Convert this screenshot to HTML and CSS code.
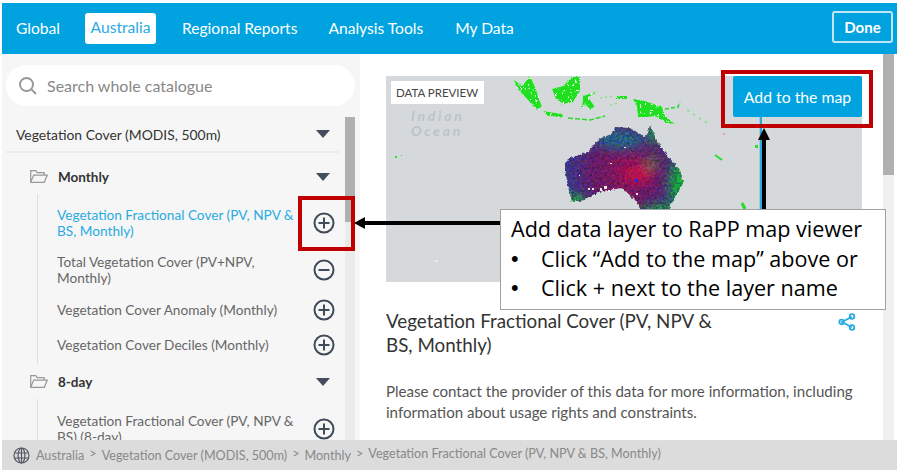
FILE: index.html
```html
<!DOCTYPE html>
<html lang="en">
<head>
	<meta charset="utf-8">
	<title>Add data layer to RaPP map viewer</title>
	<link rel="stylesheet" href="styles.css">
</head>
<body>

<div class="app">
	<header class="topbar">
		<nav class="tabs">
			<a class="tab tab-global">Global</a>
			<a class="tab tab-active">Australia</a>
			<a class="tab tab-regional">Regional Reports</a>
			<a class="tab tab-analysis">Analysis Tools</a>
			<a class="tab">My Data</a>
		</nav>
		<button class="done">Done</button>
	</header>

	<div class="content">
		<aside class="sidebar">
			<div class="search">
				<svg class="search-icon" width="20" height="20" viewBox="0 0 20 20"><circle cx="8.500" cy="8.500" r="6.500"/><path d="M13.500 13.500l4.500 4.500"/></svg>
				<span>Search whole catalogue</span>
			</div>
			<div class="tree-wrap">
				<div class="tree">
					<div class="tree-head">
						<span>Vegetation Cover (MODIS, 500m)</span>
						<svg class="caret" width="14" height="8" viewBox="0 0 14 8"><path d="M0 0h14l-7 8z"/></svg>
					</div>

					<div class="group group-first">
						<div class="group-head">
							<svg class="folder" width="18" height="13" viewBox="0 0 18 13"><path d="M.7 12.300V.7h5l1.500 2h7v2.400M.7 12.300l3-7.200h13.600l-3 7.200z"/></svg>
							<b>Monthly</b>
							<svg class="caret" width="14" height="8" viewBox="0 0 14 8"><path d="M0 0h14l-7 8z"/></svg>
						</div>
						<div class="items">
							<div class="item item-current">
								<span>Vegetation Fractional Cover (PV, NPV &amp; BS, Monthly)</span>
								<svg class="toggle" width="22" height="22" viewBox="0 0 22 22"><circle cx="11" cy="11" r="9.500"/><path d="M11 5.500v11M5.500 11h11"/></svg>
							</div>
							<div class="item">
								<span>Total Vegetation Cover (PV+NPV, Monthly)</span>
								<svg class="toggle" width="22" height="22" viewBox="0 0 22 22"><circle cx="11" cy="11" r="9.500"/><path d="M5.500 11h11"/></svg>
							</div>
							<div class="item">
								<span>Vegetation Cover Anomaly (Monthly)</span>
								<svg class="toggle" width="22" height="22" viewBox="0 0 22 22"><circle cx="11" cy="11" r="9.500"/><path d="M11 5.500v11M5.500 11h11"/></svg>
							</div>
							<div class="item">
								<span>Vegetation Cover Deciles (Monthly)</span>
								<svg class="toggle" width="22" height="22" viewBox="0 0 22 22"><circle cx="11" cy="11" r="9.500"/><path d="M11 5.500v11M5.500 11h11"/></svg>
							</div>
						</div>
					</div>

					<div class="group">
						<div class="group-head">
							<svg class="folder" width="18" height="13" viewBox="0 0 18 13"><path d="M.7 12.300V.7h5l1.500 2h7v2.400M.7 12.300l3-7.200h13.600l-3 7.200z"/></svg>
							<b>8-day</b>
							<svg class="caret" width="14" height="8" viewBox="0 0 14 8"><path d="M0 0h14l-7 8z"/></svg>
						</div>
						<div class="items">
							<div class="item">
								<span>Vegetation Fractional Cover (PV, NPV &amp; BS) (8-day)</span>
								<svg class="toggle" width="22" height="22" viewBox="0 0 22 22"><circle cx="11" cy="11" r="9.500"/><path d="M11 5.500v11M5.500 11h11"/></svg>
							</div>
						</div>
					</div>
				</div>
				<div class="scrolltrack"><div class="scrollthumb"></div></div>
			</div>
		</aside>

		<main class="detail">
			<div class="detail-body">
				<div class="preview">
					<svg class="preview-map" width="476" height="206" viewBox="386 76 476 206">
						<defs>
							<filter id="rough" x="-5%" y="-5%" width="110%" height="110%" color-interpolation-filters="sRGB">
								<feTurbulence type="fractalNoise" baseFrequency="0.4" numOctaves="2" seed="4" result="n"/>
								<feDisplacementMap in="SourceGraphic" in2="n" scale="3" xChannelSelector="R" yChannelSelector="G" result="d"/>
								<feFlood flood-color="#fff"/>
								<feComposite in2="d" operator="in" result="under"/>
								<feColorMatrix in="n" type="matrix" values="0 0 0 0 0 0 0 0 0 0 0 0 0 0 0 12 0 0 0 -3.300" result="mask"/>
								<feComposite in="d" in2="mask" operator="in" result="top"/>
								<feMerge><feMergeNode in="under"/><feMergeNode in="top"/></feMerge>
							</filter>
							<filter id="speckle" x="-5%" y="-5%" width="110%" height="110%" color-interpolation-filters="sRGB">
								<feTurbulence type="fractalNoise" baseFrequency="0.4" numOctaves="2" seed="9" result="n"/>
								<feDisplacementMap in="SourceGraphic" in2="n" scale="4" xChannelSelector="R" yChannelSelector="G" result="d"/>
								<feColorMatrix in="n" type="matrix" values=".7 0 0 0 .15 0 .7 0 0 .15 0 0 .7 0 .15 0 0 0 0 1" result="g"/>
								<feBlend in="g" in2="d" mode="overlay" result="b"/>
								<feComposite in="b" in2="d" operator="in"/>
							</filter>
							<filter id="soft" x="-50%" y="-50%" width="200%" height="200%">
								<feGaussianBlur stdDeviation="6"/>
							</filter>
							<radialGradient id="aus" gradientUnits="userSpaceOnUse" cx="625" cy="172" r="66">
								<stop offset="0" stop-color="#8a1458"/>
								<stop offset=".5" stop-color="#641c68"/>
								<stop offset=".85" stop-color="#3c3486"/>
								<stop offset="1" stop-color="#344a88"/>
							</radialGradient>
							<clipPath id="ausclip">
								<path d="M565 163l5-5 18-6 10-12 15-7 2-6 15 1 15 9 3-4 2-8 5 12 10 16 15 17 3 13-11 20-7 10-23-1-7-12-13-12-24 4-13 8-13 2-4-15-3-17z"/>
							</clipPath>
						</defs>
						<g class="islands" filter="url(#rough)">
							<path d="M513 79l9 7 8-10 5 11 7 20-5 2-10-10-7-8z"/>
							<path d="M552 89l11-3 9-9 8 0 0 14-7 11-10 2-8-7z"/>
							<path d="M583 96l15-5-10 6 7 10-5 2-5-5-3 5z"/>
							<path d="M543 111l19 3 1 3-15-1z"/>
							<path d="M617 96h10v3h-10z"/>
							<path d="M633 99l12 2 17 6 3 9 10 8-10-2-10-6-7 1-10 0-1-10z"/>
						</g>
						<g class="isle-lines">
							<path d="M568 118l22 2 15-4" stroke-dasharray="5 2"/>
							<path d="M665 109l13-2 2-5" stroke-dasharray="4 2"/>
							<path d="M715 155l7 5" stroke-width="2"/>
							<path class="faint" d="M687 110l20 13" stroke-dasharray="3 4"/>
							<path class="faint" d="M600 98l15 -2M610 105l8 -2" stroke-dasharray="2 3"/>
							<path d="M742 203l3 6" stroke-width="3"/>
						</g>
						<g class="specks">
							<rect x="395" y="156" width="2" height="2"/>
							<rect x="401" y="155" width="1" height="1"/>
							<rect x="755" y="145" width="3" height="3"/>
							<rect x="723" y="133" width="2" height="2" fill="#e8a090"/>
							<rect x="774" y="133" width="1" height="1" fill="#8fdc8f"/>
							<rect x="435" y="260" width="3" height="2" fill="#e8ecee"/>
						</g>
						<g filter="url(#speckle)">
							<g clip-path="url(#ausclip)">
								<rect x="555" y="120" width="140" height="100" fill="url(#aus)"/>
								<g filter="url(#soft)">
									<ellipse class="blob-blue" cx="620" cy="140" rx="26" ry="9"/>
									<ellipse class="blob-green" cx="684" cy="185" rx="14" ry="26"/>
									<ellipse class="blob-green" cx="662" cy="214" rx="24" ry="8"/>
									<ellipse class="blob-green" cx="655" cy="128" rx="6" ry="16"/>
									<ellipse class="blob-bright" cx="574" cy="204" rx="12" ry="7"/>
									<ellipse class="blob-bright" cx="653" cy="162" rx="4" ry="4"/>
									<ellipse class="blob-red" cx="638" cy="174" rx="14" ry="9"/>
								</g>
							</g>
						</g>
						<g class="aus-dots">
							<rect x="588" y="188" width="2" height="2"/>
							<rect x="592" y="188" width="2" height="2"/>
							<rect x="600" y="188" width="2" height="3"/>
							<rect x="604" y="186" width="3" height="3"/>
							<rect x="608" y="190" width="2" height="2"/>
							<rect x="579" y="175" width="1" height="1"/>
							<rect x="610" y="163" width="2" height="1"/>
							<rect x="624" y="147" width="2" height="1"/>
							<rect x="636" y="193" width="2" height="2"/>
						</g>
						<rect class="aus-dot-blue" x="635" y="179" width="3" height="3"/>
					</svg>
					<span class="preview-label">DATA PREVIEW</span>
					<span class="ocean">Indian<br>Ocean</span>
					<button class="add-map">Add to the map</button>
					<div class="map-tail"></div>
				</div>
				<div class="title-row">
					<h2>Vegetation Fractional Cover (PV, NPV &amp; BS, Monthly)</h2>
					<svg class="share" width="18" height="18" viewBox="0 0 18 18"><path d="M13.800 3.700L4 9l9.800 5.300"/><circle cx="14" cy="3.500" r="2.300"/><circle cx="3.600" cy="9" r="2.300"/><circle cx="14" cy="14.500" r="2.300"/></svg>
				</div>
				<p class="note">Please contact the provider of this data for more information, including information about usage rights and constraints.</p>
			</div>
			<div class="scrolltrack main-track"><div class="scrollthumb main-thumb"></div></div>
		</main>
	</div>

	<footer class="crumbs">
		<svg class="globe" width="17" height="17" viewBox="0 0 17 17"><circle cx="8.500" cy="8.500" r="7.500"/><ellipse cx="8.500" cy="8.500" rx="3.400" ry="7.500"/><path d="M8.500 1v15M1.500 6h14M1.500 11h14"/></svg>
		<span>Australia</span><i>&gt;</i>
		<span>Vegetation Cover (MODIS, 500m)</span><i>&gt;</i>
		<span>Monthly</span><i>&gt;</i>
		<span class="crumb-last">Vegetation Fractional Cover (PV, NPV &amp; BS, Monthly)</span>
	</footer>
</div>

<!-- annotations drawn over the screenshot -->
<div class="mark mark-plus"></div>
<div class="mark mark-add"></div>
<div class="arrow-left"></div>
<div class="arrow-up"></div>
<div class="callout">
	<p>Add data layer to RaPP map viewer</p>
	<ul>
		<li>Click “Add to the map” above or</li>
		<li>Click + next to the layer name</li>
	</ul>
</div>

</body>
</html>
```
FILE: styles.css
```css
html, body {
	margin: 0;
	height: 100%;
	overflow: hidden;
	background: #fff;
}

body {
	position: relative;
	font-family: "Lato", "Noto Sans", sans-serif;
	color: #444;
}

.app {
	display: flex;
	flex-direction: column;
	width: 895px;
	height: 467px;
	margin: 3px 0 0 2px;
}

/* top bar */
.topbar {
	display: flex;
	align-items: center;
	justify-content: space-between;
	flex: none;
	height: 51px;
	padding: 0 4px 0 14px;
	box-sizing: border-box;
	background: #00a3e0;
	color: #fff;
}

.tabs {
	display: flex;
	align-items: center;
	font-size: 15.6px;
}

.tab {
	display: block;
	margin: 0 31px 2px 0;
}

.tab-global {
	margin-right: 25px;
}

.tab-analysis {
	margin-right: 32px;
}

.tab-active {
	width: 71px;
	height: 31px;
	margin: 0 26px 0 0;
	border-radius: 3px;
	background: #fff;
	color: #29abe2;
	line-height: 29px;
	text-align: center;
}

.done {
	width: 61px;
	height: 32px;
	margin-top: -4px;
	padding: 0;
	border: 2px solid #bfe6f6;
	border-radius: 3px;
	background: none;
	color: #fff;
	font: bold 15px "Lato", sans-serif;
}

.content {
	display: flex;
	flex: 1;
	min-height: 0;
}

/* left panel */
.sidebar {
	display: flex;
	flex-direction: column;
	flex: none;
	width: 358px;
	padding: 11px 5px 0 4px;
	box-sizing: border-box;
	background: #f6f6f6;
}

.search {
	display: flex;
	flex: none;
	align-items: center;
	gap: 9px;
	height: 41px;
	padding-left: 12px;
	border-radius: 21px;
	background: #fff;
	color: #888;
	font-size: 16px;
}

.search-icon {
	fill: none;
	stroke: #999;
	stroke-width: 2;
}

.tree-wrap {
	display: flex;
	flex: 1;
	min-height: 0;
	margin-top: 11px;
}

.tree {
	flex: 1;
	overflow: hidden;
	padding-right: 6px;
}

.tree-head {
	display: flex;
	align-items: center;
	justify-content: space-between;
	height: 36px;
	padding: 0 9px 0 10px;
	border-bottom: 2px solid #ebebeb;
	box-sizing: border-box;
	color: #333;
	font-size: 13.9px;
}

.caret {
	flex: none;
	fill: #444d5c;
}

.group-first {
	margin-top: 6px;
}

.group-head {
	display: flex;
	align-items: center;
	height: 35px;
	padding: 0 9px 0 24px;
	color: #333;
	font-size: 13.5px;
}

.group-head b {
	flex: 1;
	margin-left: 10px;
}

.folder {
	flex: none;
	fill: none;
	stroke: #999;
	stroke-width: 1.2;
}

.items {
	display: flex;
	flex-direction: column;
	gap: 13px;
	margin-left: 31px;
	padding: 14px 4px 8px 19px;
	border-left: 1px solid #ddd;
}

.group-first .items {
	padding-top: 13px;
}

.item {
	display: flex;
	align-items: center;
	justify-content: space-between;
	min-height: 22px;
	color: #666;
	font-size: 13.65px;
	line-height: 16px;
}

.item span {
	width: 245px;
}

.item-current {
	margin-bottom: 2px;
	color: #29abe2;
}

.toggle {
	flex: none;
	fill: none;
	stroke: #3f4a5a;
	stroke-width: 2;
}

.scrolltrack {
	flex: none;
	width: 10px;
	background: #ebebeb;
}

.scrollthumb {
	height: 105px;
	background: #b0b0b0;
}

/* right panel */
.detail {
	display: flex;
	flex: 1;
	min-width: 0;
	background: #fff;
}

.detail-body {
	flex: 1;
	overflow: hidden;
	padding: 22px 21px 0 26px;
}

.main-track {
	width: 11px;
	margin-right: 3px;
	background: #f0f0f0;
}

.main-thumb {
	height: 121px;
}

.preview {
	position: relative;
	height: 206px;
	background: #d5d9dc;
	overflow: hidden;
}

.preview-map {
	display: block;
}

.islands {
	fill: #1ee01e;
}

.isle-lines {
	fill: none;
	stroke: #2bd92b;
	stroke-width: 1.5;
}

.isle-lines .faint {
	stroke: #8fdc8f;
}

.specks {
	fill: #2bdc2b;
}

.blob-blue {
	fill: #1d6a8a;
}

.blob-green {
	fill: #18a838;
}

.blob-bright {
	fill: #18d018;
}

.blob-red {
	fill: #c80e48;
}

.aus-dots {
	fill: #f2e6ee;
}

.aus-dot-blue {
	fill: #1a2ae0;
}

.preview-label {
	position: absolute;
	top: 5px;
	left: 5px;
	width: 83px;
	height: 23px;
	padding: 0 5px;
	background: #fff;
	color: #444;
	font-size: 11.5px;
	line-height: 23px;
	white-space: nowrap;
}

.ocean {
	position: absolute;
	top: 32px;
	left: 25px;
	color: #bcc4c9;
	font-size: 14px;
	font-style: italic;
	font-weight: bold;
	letter-spacing: 2.7px;
	line-height: 15px;
}

.add-map {
	position: absolute;
	top: 0;
	right: 0;
	width: 129px;
	height: 41px;
	padding: 0;
	border: 0;
	border-radius: 2px;
	background: #00a3e0;
	color: #fff;
	font: 15.8px "Lato", sans-serif;
}

/* the thin blue line that hangs below the button */
.map-tail {
	position: absolute;
	top: 41px;
	left: 373px;
	width: 2px;
	height: 92px;
	border: solid #a8c8d8;
	border-width: 0 0 0 1px;
	background: #29abe2;
}

.title-row {
	display: flex;
	justify-content: space-between;
	margin-top: 27px;
	padding-right: 6px;
}

.title-row h2 {
	width: 345px;
	margin: 0;
	color: #333;
	font-size: 18.8px;
	font-weight: normal;
	line-height: 24px;
}

.share {
	flex: none;
	margin-top: 4px;
	fill: none;
	stroke: #29abe2;
	stroke-width: 1.8;
}

.note {
	margin: 24px 0 0;
	color: #555;
	font-size: 15.1px;
	line-height: 21px;
}

/* path along the bottom */
.crumbs {
	display: flex;
	flex: none;
	align-items: center;
	height: 30px;
	padding-left: 11px;
	background: #dcdcdc;
	color: #888;
	font-size: 12.6px;
}

.crumbs i {
	margin: -3px 5px 0;
	font-style: normal;
}

.crumb-last {
	margin-top: -3px;
	font-size: 12.6px;
}

.globe {
	flex: none;
	margin-right: 6px;
	fill: none;
	stroke: #505862;
	stroke-width: 1.2;
}

/* annotations */
.mark {
	position: absolute;
	box-sizing: border-box;
	border: 4.5px solid #c00000;
}

.mark-plus {
	left: 298px;
	top: 196px;
	width: 57px;
	height: 55px;
}

.mark-add {
	left: 721px;
	top: 70px;
	width: 152px;
	height: 58px;
}

.arrow-left {
	position: absolute;
	left: 365px;
	top: 221px;
	width: 135px;
	height: 4px;
	background: #000;
}

.arrow-left::before {
	content: "";
	position: absolute;
	left: -11px;
	top: -4px;
	border-top: 6px solid transparent;
	border-bottom: 6px solid transparent;
	border-right: 11px solid #000;
}

.arrow-up {
	position: absolute;
	left: 762px;
	top: 139px;
	width: 4px;
	height: 70px;
	background: #000;
}

.arrow-up::before {
	content: "";
	position: absolute;
	left: -4px;
	top: -11px;
	border-left: 6px solid transparent;
	border-right: 6px solid transparent;
	border-bottom: 12px solid #000;
}

.callout {
	position: absolute;
	left: 500px;
	top: 209px;
	width: 386px;
	height: 101px;
	padding: 4px 0 0 10px;
	box-sizing: border-box;
	border: 1px solid #a0a0a0;
	background: #fff;
	color: #000;
	font-family: "Open Sans", sans-serif;
	font-size: 21.6px;
	line-height: 29.5px;
}

.callout p {
	margin: 0;
	white-space: nowrap;
}

.callout ul {
	margin: 0;
	padding: 0;
	list-style: none;
}

.callout li {
	display: flex;
	white-space: nowrap;
}

.callout li::before {
	content: "•";
	width: 30px;
	font-family: "Liberation Sans", sans-serif;
}
```
